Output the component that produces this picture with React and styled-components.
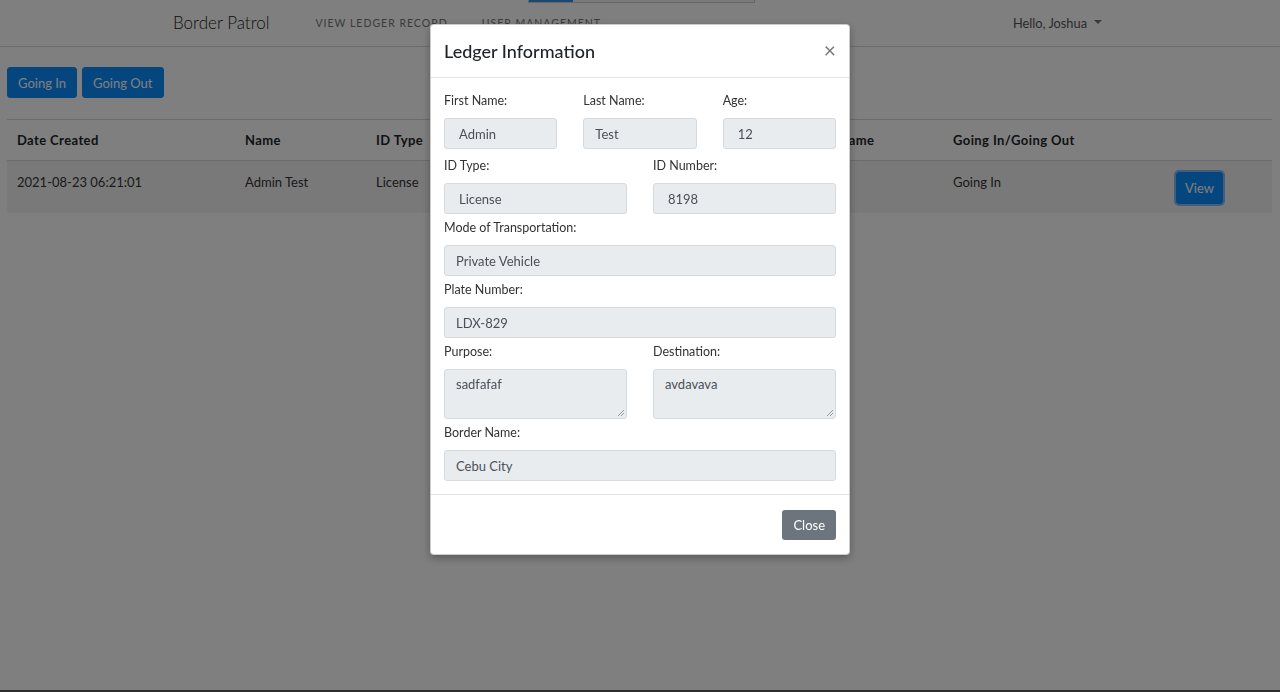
import React from 'react';
import styled, { createGlobalStyle } from 'styled-components';

const GlobalStyle = createGlobalStyle`
	body {
		margin: 0;
		font-family: Lato, "Open Sans", sans-serif;
		color: #212529;
		background: #fff;
	}
	* {
		box-sizing: border-box;
	}
`;

const Page = styled.div`
	min-height: 100vh;
	background: #fff;
`;

const Navbar = styled.nav`
	position: relative;
	display: flex;
	align-items: center;
	height: 47px;
	padding: 0 178px 2px 173px;
	border-bottom: 1px solid #d6d8db;
`;

const LoadBar = styled.div`
	position: absolute;
	top: 0;
	left: 528px;
	width: 227px;
	height: 3px;
	background: #f4f4f4;
	border: 1px solid #cfcfcf;
	border-top: none;
	&::before {
		content: '';
		display: block;
		width: 44px;
		height: 100%;
		background: #3a8ee6;
	}
`;

const Brand = styled.div`
	font-size: 17px;
	font-weight: 300;
	color: #222;
	margin-right: 46px;
`;

const NavLink = styled.a`
	font-size: 10.5px;
	letter-spacing: 1px;
	text-transform: uppercase;
	color: #777;
	margin-right: 34px;
	margin-top: 1px;
`;

const UserMenu = styled.div`
	margin-left: auto;
	margin-top: 2px;
	display: flex;
	align-items: center;
	gap: 7px;
	font-size: 12.8px;
	color: #555;
	&::after {
		content: '';
		border-top: 4px solid #777;
		border-left: 4px solid transparent;
		border-right: 4px solid transparent;
		margin-top: -2px;
	}
`;

const Main = styled.main`
	padding: 20px 8px 0 7px;
`;

const ButtonRow = styled.div`
	display: flex;
	gap: 5px;
	margin-bottom: 21px;
`;

const PrimaryButton = styled.button`
	font-family: inherit;
	font-size: 13px;
	color: #fff;
	background: #0c8cff;
	border: 1px solid #0c8cff;
	border-radius: 3px;
	height: ${({ small }) => (small ? 32 : 31)}px;
	padding: 0 ${({ small }) => (small ? 8 : 10)}px;
	box-shadow: ${({ focused }) => (focused ? '0 0 0 2px rgba(60, 150, 255, 0.6)' : 'none')};
`;

const Table = styled.table`
	width: 100%;
	border-collapse: collapse;
	table-layout: fixed;
	font-size: 13px;
`;

const Th = styled.th`
	width: ${({ w }) => w}px;
	text-align: left;
	font-weight: 700;
	letter-spacing: 0.4px;
	padding: 10px;
	line-height: 20px;
	border-top: 1px solid #d6d8db;
	border-bottom: 1px solid #d6d8db;
`;

const Row = styled.tr`
	background: #f2f2f2;
`;

const Td = styled.td`
	padding: 12px 10px;
	height: 52px;
	line-height: 19px;
	vertical-align: top;
	color: #333;
	white-space: nowrap;
	overflow: hidden;
`;

const ButtonCell = styled(Td)`
	padding: 11px 10px 9px;
`;

const Backdrop = styled.div`
	position: fixed;
	inset: 0;
	background: rgba(0, 0, 0, 0.5);
	display: flex;
	justify-content: center;
	align-items: flex-start;
`;

const BottomBar = styled.div`
	position: fixed;
	left: 0;
	right: 0;
	bottom: 0;
	height: 2px;
	background: #2c2c2c;
`;

const Modal = styled.div`
	width: 420px;
	margin-top: 24px;
	background: #fff;
	border: 1px solid rgba(0, 0, 0, 0.2);
	border-radius: 4px;
	box-shadow: 0 3px 8px rgba(0, 0, 0, 0.3);
`;

const ModalHeader = styled.div`
	display: flex;
	align-items: center;
	justify-content: space-between;
	height: 53px;
	padding: 0 13px 0 13px;
	border-bottom: 1px solid #e5e5e5;
`;

const ModalTitle = styled.h5`
	margin: 0;
	font-size: 18px;
	font-weight: 500;
	color: #212529;
`;

const CloseX = styled.span`
	font-size: 21px;
	line-height: 1;
	color: #777;
	margin-top: -4px;
`;

const ModalBody = styled.div`
	padding: 14px 13px 13px;
`;

const FieldRow = styled.div`
	display: grid;
	grid-template-columns: repeat(${({ cols }) => cols || 1}, 1fr);
	column-gap: 26px;
	margin-bottom: ${({ gap }) => (gap === undefined ? 5 : gap)}px;
`;

const Field = styled.div`
	display: flex;
	flex-direction: column;
`;

const Label = styled.label`
	font-size: 12.5px;
	line-height: 18px;
	margin-bottom: 8px;
	color: #333;
`;

const Input = styled.div`
	height: ${({ area }) => (area ? 50 : 31)}px;
	padding: ${({ area }) => (area ? '6px' : '0')} ${({ inset }) => inset || 11}px 0;
	display: flex;
	align-items: ${({ area }) => (area ? 'flex-start' : 'center')};
	background: #e9ecef;
	border: 1px solid #d6dadd;
	border-radius: 3px;
	font-size: 13px;
	color: #495057;
	position: relative;
`;

const Grip = styled.svg`
	position: absolute;
	right: 1px;
	bottom: 1px;
`;

const ModalFooter = styled.div`
	display: flex;
	justify-content: flex-end;
	padding: 15px 13px 14px;
	border-top: 1px solid #e5e5e5;
`;

const SecondaryButton = styled.button`
	font-family: inherit;
	font-size: 13px;
	color: #fff;
	background: #6c757d;
	border: none;
	border-radius: 3px;
	height: 30px;
	padding: 0 11px;
`;

const TextBox = ({ children, inset }) => (
	<Input inset={inset}>{children}</Input>
);

const TextArea = ({ children }) => (
	<Input area>
		{children}
		<Grip width="9" height="9" viewBox="0 0 9 9">
			<path d="M8 2 L2 8 M8 5 L5 8" stroke="#999" strokeWidth="1" />
		</Grip>
	</Input>
);

const columns = [
	['Date Created', 228],
	['Name', 131],
	['ID Type', 134],
	['ID Number', 120],
	['Plate Number', 163],
	['Border Name', 160],
	['Going In/Going Out', 223],
	['', 106],
];

export default function App() {
	return (
		<Page>
			<GlobalStyle />
			<Navbar>
				<LoadBar />
				<Brand>Border Patrol</Brand>
				<NavLink>View Ledger Record</NavLink>
				<NavLink>User Management</NavLink>
				<UserMenu>Hello, Joshua</UserMenu>
			</Navbar>

			<Main>
				<ButtonRow>
					<PrimaryButton>Going In</PrimaryButton>
					<PrimaryButton>Going Out</PrimaryButton>
				</ButtonRow>

				<Table>
					<thead>
						<tr>
							{columns.map(([label, w]) => (
								<Th key={label + w} w={w}>
									{label}
								</Th>
							))}
						</tr>
					</thead>
					<tbody>
						<Row>
							<Td>2021-08-23 06:21:01</Td>
							<Td>Admin Test</Td>
							<Td>License</Td>
							<Td>8198</Td>
							<Td>LDX-829</Td>
							<Td>Cebu City</Td>
							<Td>Going In</Td>
							<ButtonCell>
								<PrimaryButton small focused>
									View
								</PrimaryButton>
							</ButtonCell>
						</Row>
					</tbody>
				</Table>
			</Main>

			<Backdrop>
				<Modal>
					<ModalHeader>
						<ModalTitle>Ledger Information</ModalTitle>
						<CloseX>×</CloseX>
					</ModalHeader>
					<ModalBody>
						<FieldRow cols={3} gap={8}>
							<Field>
								<Label>First Name:</Label>
								<TextBox inset={14}>Admin</TextBox>
							</Field>
							<Field>
								<Label>Last Name:</Label>
								<TextBox>Test</TextBox>
							</Field>
							<Field>
								<Label>Age:</Label>
								<TextBox inset={14}>12</TextBox>
							</Field>
						</FieldRow>
						<FieldRow cols={2}>
							<Field>
								<Label>ID Type:</Label>
								<TextBox inset={14}>License</TextBox>
							</Field>
							<Field>
								<Label>ID Number:</Label>
								<TextBox inset={14}>8198</TextBox>
							</Field>
						</FieldRow>
						<FieldRow>
							<Field>
								<Label>Mode of Transportation:</Label>
								<TextBox>Private Vehicle</TextBox>
							</Field>
						</FieldRow>
						<FieldRow>
							<Field>
								<Label>Plate Number:</Label>
								<TextBox>LDX-829</TextBox>
							</Field>
						</FieldRow>
						<FieldRow cols={2}>
							<Field>
								<Label>Purpose:</Label>
								<TextArea>sadfafaf</TextArea>
							</Field>
							<Field>
								<Label>Destination:</Label>
								<TextArea>avdavava</TextArea>
							</Field>
						</FieldRow>
						<FieldRow gap={0}>
							<Field>
								<Label>Border Name:</Label>
								<TextBox>Cebu City</TextBox>
							</Field>
						</FieldRow>
					</ModalBody>
					<ModalFooter>
						<SecondaryButton>Close</SecondaryButton>
					</ModalFooter>
				</Modal>
			</Backdrop>
			<BottomBar />
		</Page>
	);
}
